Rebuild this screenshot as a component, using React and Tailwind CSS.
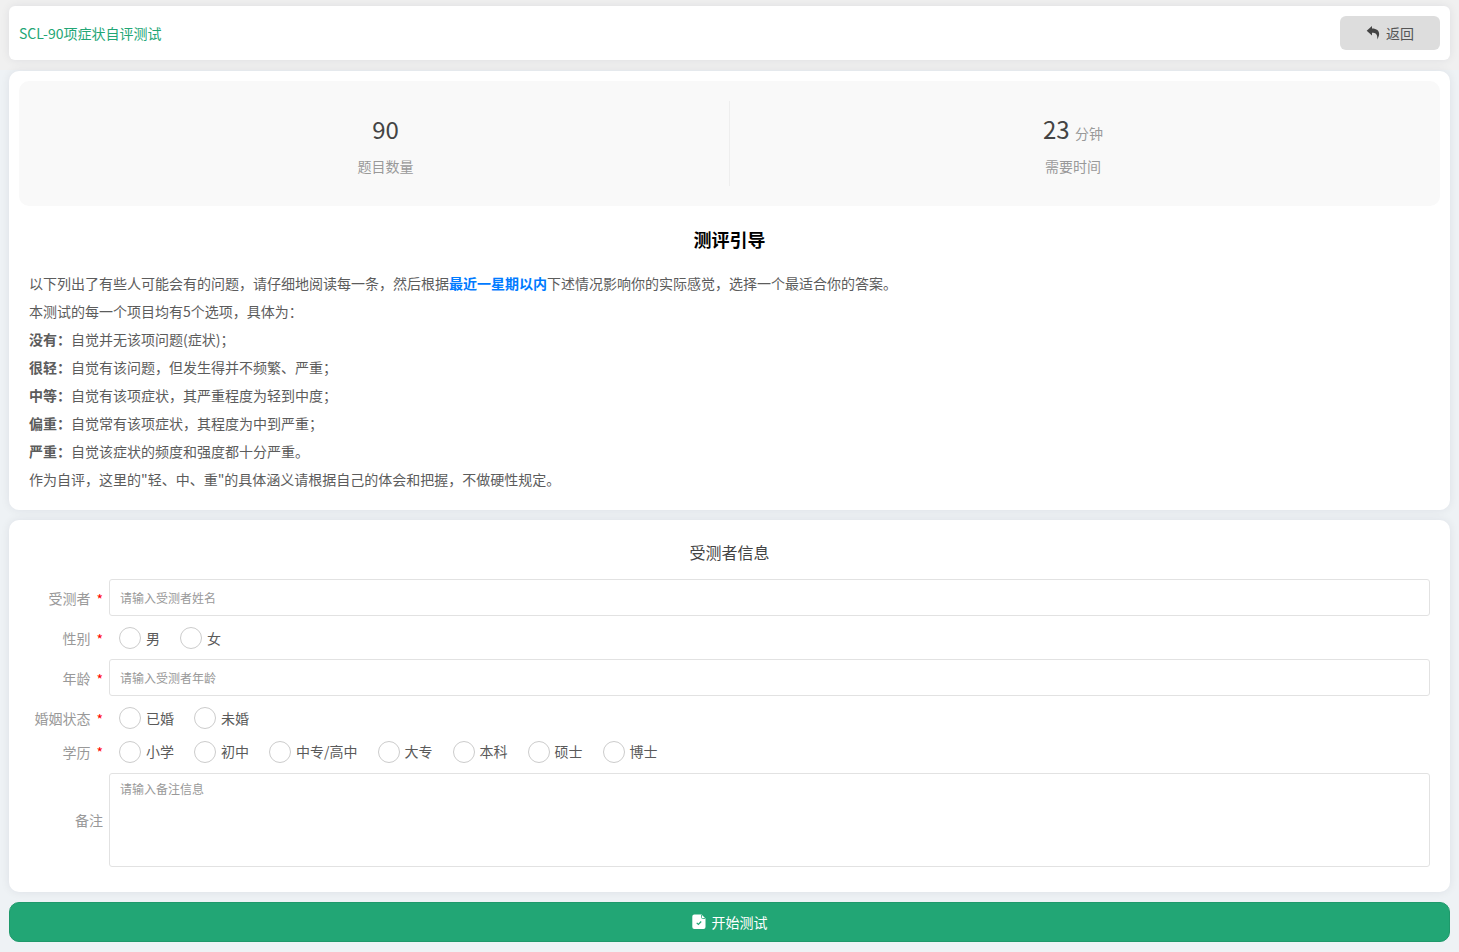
import { useState } from 'react';

// full-width punctuation is escaped so it is not mistaken for ASCII
const intro = {
    before: '以下列出了有些人可能会有的问题\uff0c请仔细地阅读每一条\uff0c然后根据',
    period: '最近一星期以内',
    after: '下述情况影响你的实际感觉\uff0c选择一个最适合你的答案。',
};

const levels = [
    { name: '没有', text: '自觉并无该项问题(症状)\uff1b' },
    { name: '很轻', text: '自觉有该问题\uff0c但发生得并不频繁、严重\uff1b' },
    { name: '中等', text: '自觉有该项症状\uff0c其严重程度为轻到中度\uff1b' },
    { name: '偏重', text: '自觉常有该项症状\uff0c其程度为中到严重\uff1b' },
    { name: '严重', text: '自觉该症状的频度和强度都十分严重。' },
];

const Label = ({ text, required, tight }) => (
    <div className="w-[74px] mr-[6px] shrink-0 text-right text-[#999] whitespace-nowrap">
        {text}
        {required && <span className={`ml-[6px] text-[#ff0000] ${tight ? '' : 'relative top-px'}`}>*</span>}
    </div>
);

const RadioRow = ({ label, name, options, className, tight }) => {
    const [value, setValue] = useState('');

    return (
        <div className={`flex items-center ${className}`}>
            <Label text={label} required tight={tight} />
            <div className="flex gap-5 pl-[10px]">
                {options.map((o) => (
                    <label key={o} className="flex items-center gap-[5px] text-[#5a5a5a] cursor-pointer">
                        <input
                            type="radio"
                            name={name}
                            checked={value === o}
                            onChange={() => setValue(o)}
                            className="appearance-none w-[22px] h-[22px] rounded-full border border-[#ccc] bg-white checked:border-[6px] checked:border-[#22a675]"
                        />
                        <span className={tight ? 'pb-[2px]' : ''}>{o}</span>
                    </label>
                ))}
            </div>
        </div>
    );
};

const InputRow = ({ label, placeholder }) => (
    <div className="flex items-center h-[37px]">
        <Label text={label} required />
        <input
            className="flex-1 h-[37px] px-[10px] text-xs border border-[#e2e2e2] rounded-[3px] outline-none placeholder:text-[#999]"
            placeholder={placeholder}
        />
    </div>
);

const App = () => {
    return (
        <div className="h-[952px] overflow-hidden bg-[#eef2f5] text-sm leading-5 text-[#555] font-['Noto_Sans_CJK_SC',sans-serif]">
            <div className="h-[70px] bg-[#f0f0f0] px-[9px] pt-[6px]">
                <div className="flex items-center justify-between h-[54px] px-[10px] bg-white rounded-[6px] shadow-[0_0_10px_rgba(0,0,50,0.08)]">
                    <h1 className="text-[#22a675]">SCL-90项症状自评测试</h1>
                    <button className="flex items-center justify-center w-[100px] h-[34px] bg-[#ddd] rounded-[6px] text-[#555]">
                        <svg className="w-[14px] h-[14px] mr-[6px]" viewBox="-.5 0 14 14" fill="#444">
                            <path d="M5.500 0 .2 4.700l5.300 4.700V6.700c3.900 0 5.900 1.900 5.100 6.700C14.500 8 12.800 2.600 5.500 2.600Z" />
                        </svg>
                        返回
                    </button>
                </div>
            </div>

            <div className="px-[9px] pt-px">
                <div className="h-[439px] p-[10px] bg-white rounded-[10px] shadow-[0_0_10px_rgba(0,0,50,0.08)]">
                    <div className="flex h-[125px] py-5 pl-[23px] pr-6 bg-[#f9f9f9] rounded-[10px] text-center">
                        <div className="w-[688px] border-r border-[#eee] pt-3">
                            <p className="text-2xl leading-8 text-[#444]">90</p>
                            <p className="mt-[11px] text-[#999]">题目数量</p>
                        </div>
                        <div className="flex-1 pt-3">
                            <p className="text-2xl leading-8 text-[#444]">
                                23 <span className="text-sm text-[#999]">分钟</span>
                            </p>
                            <p className="mt-[11px] text-[#999]">需要时间</p>
                        </div>
                    </div>

                    <h2 className="mt-[19px] text-center text-lg leading-7 font-bold text-black">测评引导</h2>

                    <div className="mt-4 px-[10px] leading-7 text-[#5c5c5c]">
                        <p>
                            {intro.before}
                            <b className="text-[#007bff]">{intro.period}</b>
                            {intro.after}
                        </p>
                        <p>{'本测试的每一个项目均有5个选项\uff0c具体为\uff1a'}</p>
                        {levels.map((l) => (
                            <p key={l.name}>
                                <b>{l.name + '\uff1a'}</b>
                                {l.text}
                            </p>
                        ))}
                        <p>{'作为自评\uff0c这里的"轻、中、重"的具体涵义请根据自己的体会和把握\uff0c不做硬性规定。'}</p>
                    </div>
                </div>

                <div className="mt-[10px] h-[372px] px-5 pt-[19px] bg-white rounded-[10px] shadow-[0_0_10px_rgba(0,0,50,0.08)]">
                    <h3 className="mb-[14px] text-center text-base leading-[26px] text-[#444]">受测者信息</h3>
                    <InputRow label="受测者" placeholder="请输入受测者姓名" />
                    <RadioRow label="性别" name="sex" options={['男', '女']} className="h-[43px]" />
                    <InputRow label="年龄" placeholder="请输入受测者年龄" />
                    <RadioRow label="婚姻状态" name="marriage" options={['已婚', '未婚']} className="h-[44px]" />
                    <RadioRow
                        label="学历"
                        name="education"
                        options={['小学', '初中', '中专/高中', '大专', '本科', '硕士', '博士']}
                        className="h-[23px] mb-[10px]"
                        tight
                    />
                    <div className="flex items-center">
                        <Label text="备注" />
                        <textarea
                            className="flex-1 h-[94px] px-[10px] py-[5px] text-xs leading-5 border border-[#e2e2e2] rounded-[3px] resize-none outline-none placeholder:text-[#999]"
                            placeholder="请输入备注信息"
                        />
                    </div>
                </div>

                <button className="flex items-center justify-center w-full h-10 mt-[10px] bg-[#22a675] border border-[#1f996b] rounded-[10px] text-white">
                    <svg className="w-[14px] h-[16px] mr-[6px]" viewBox="0 0 14 16">
                        <path
                            d="M2 .5h7.500L13.500 4.500V13a2 2 0 0 1-2 2H2.300a2 2 0 0 1-2-2V2.500a2 2 0 0 1 2-2Z"
                            fill="#fff"
                        />
                        <path d="M9.500 1v2.500a1 1 0 0 0 1 1H13" fill="none" stroke="#22a675" strokeWidth=".8" />
                        <path d="m4.700 8.800 1.700 1.700 2.800-3" fill="none" stroke="#22a675" strokeWidth="1.200" />
                    </svg>
                    开始测试
                </button>
            </div>
        </div>
    );
};

export default App;
